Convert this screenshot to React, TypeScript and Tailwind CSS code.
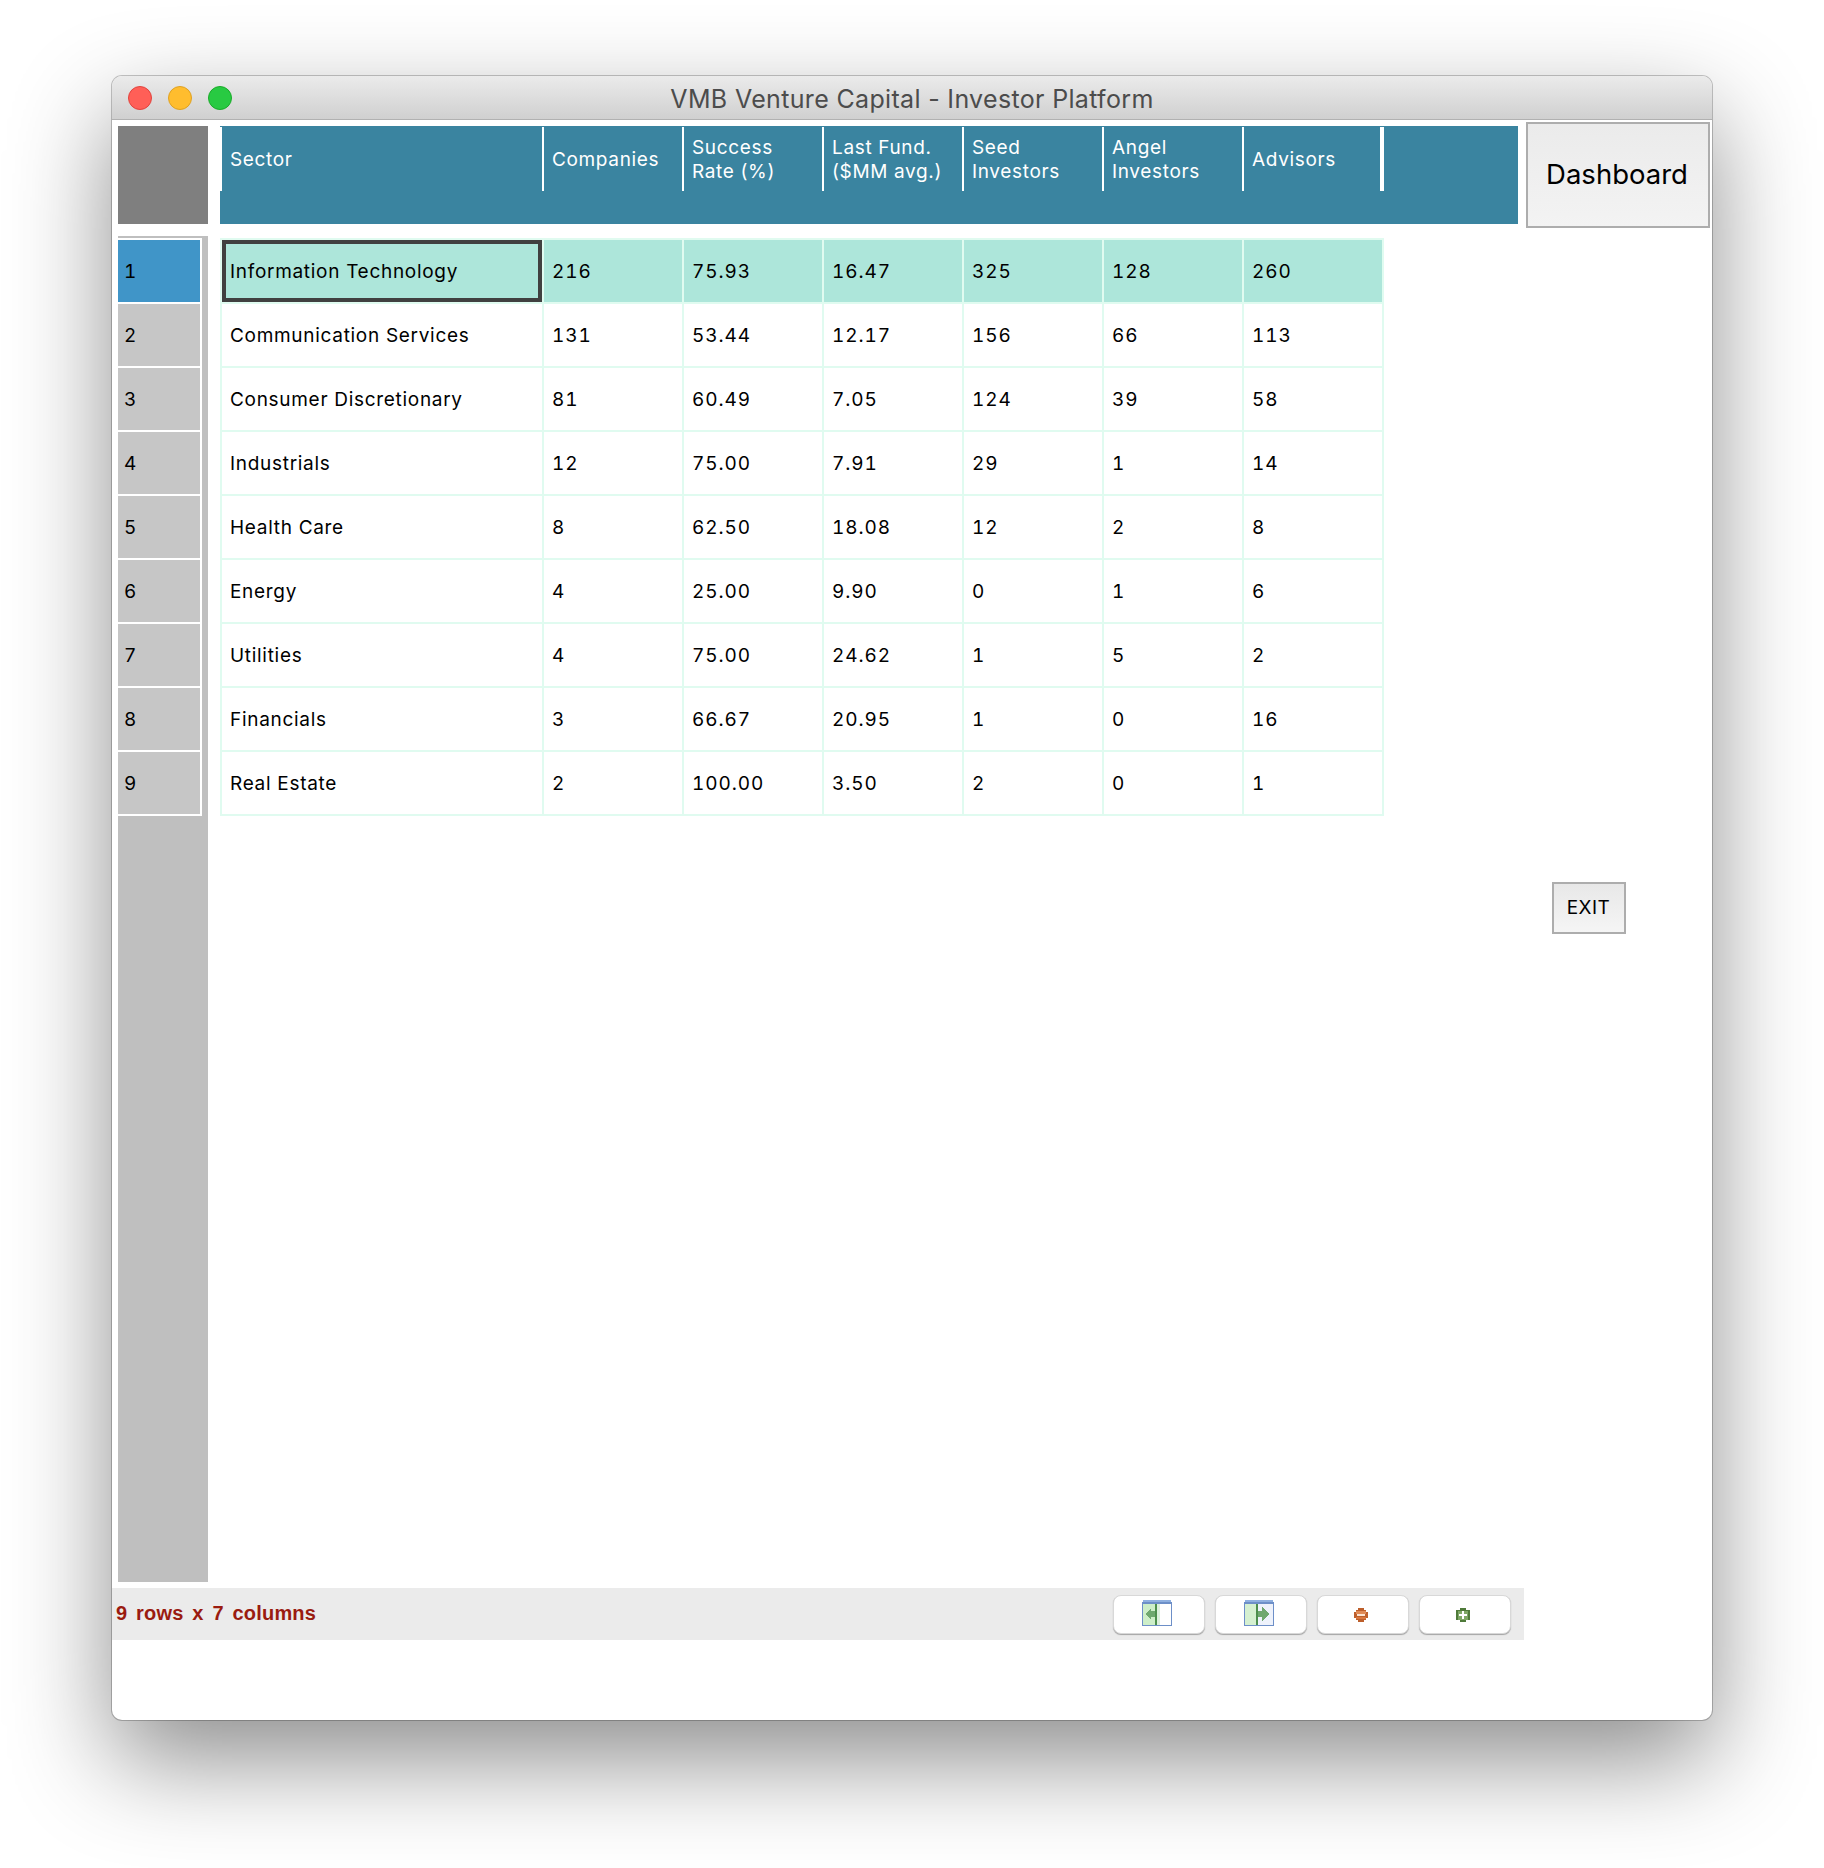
const rows = [
  ['Information Technology', '216', '75.93', '16.47', '325', '128', '260'],
  ['Communication Services', '131', '53.44', '12.17', '156', '66', '113'],
  ['Consumer Discretionary', '81', '60.49', '7.05', '124', '39', '58'],
  ['Industrials', '12', '75.00', '7.91', '29', '1', '14'],
  ['Health Care', '8', '62.50', '18.08', '12', '2', '8'],
  ['Energy', '4', '25.00', '9.90', '0', '1', '6'],
  ['Utilities', '4', '75.00', '24.62', '1', '5', '2'],
  ['Financials', '3', '66.67', '20.95', '1', '0', '16'],
  ['Real Estate', '2', '100.00', '3.50', '2', '0', '1'],
]

const headers = [
  ['Companies'],
  ['Success', 'Rate (%)'],
  ['Last Fund.', '($MM avg.)'],
  ['Seed', 'Investors'],
  ['Angel', 'Investors'],
  ['Advisors'],
]

function PaneLeftIcon() {
  return (
    <svg className="blur-[0.5px] mb-[2px]" width="30" height="26" viewBox="0 0 30 26" shapeRendering="crispEdges">
      <rect x="1" y="0" width="28" height="3" fill="#8fb0e0" />
      <rect x="0" y="2" width="30" height="24" fill="#6d8fc8" />
      <rect x="1" y="4" width="13" height="21" fill="#cdeec8" />
      <rect x="14" y="4" width="15" height="21" fill="#ffffff" />
      <rect x="13" y="4" width="2" height="21" fill="#4d8f4d" />
      <rect x="15" y="4" width="3" height="21" fill="#dcefdc" />
      <path d="M3 14 L9 8 V11 H13 V17 H9 V20 Z" fill="#6fa86f" />
    </svg>
  )
}

function PaneRightIcon() {
  return (
    <svg className="blur-[0.5px] mb-[2px]" width="30" height="26" viewBox="0 0 30 26" shapeRendering="crispEdges">
      <rect x="1" y="0" width="28" height="3" fill="#8fb0e0" />
      <rect x="0" y="2" width="30" height="24" fill="#6d8fc8" />
      <rect x="1" y="4" width="12" height="21" fill="#d5f0d0" />
      <rect x="13" y="4" width="16" height="21" fill="#eef2fb" />
      <rect x="12" y="4" width="2" height="21" fill="#4d8f4d" />
      <path d="M25 14 L18 7 V11 H14 V17 H18 V21 Z" fill="#6fa86f" />
    </svg>
  )
}

function MinusIcon() {
  return (
    <svg className="blur-[0.4px] mt-[2px]" width="14" height="14" viewBox="0 0 14 14" shapeRendering="crispEdges">
      <path d="M4 0H10V2H12V4H14V10H12V12H10V14H4V12H2V10H0V4H2V2H4Z" fill="#bd5f2b" />
      <rect x="2" y="3" width="10" height="3" fill="#e08a55" />
      <rect x="3" y="6" width="8" height="2" fill="#fbe3d0" />
      <rect x="2" y="9" width="10" height="2" fill="#d9763c" />
    </svg>
  )
}

function PlusIcon() {
  return (
    <svg className="blur-[0.4px] mt-[2px]" width="14" height="14" viewBox="0 0 14 14" shapeRendering="crispEdges">
      <path d="M4 0H10V2H14V12H10V14H4V12H0V2H4Z" fill="#4f7a3a" />
      <rect x="2" y="3" width="10" height="9" fill="#7fa866" />
      <rect x="3" y="6" width="8" height="2" fill="#ffffff" />
      <rect x="6" y="3" width="2" height="8" fill="#ffffff" />
    </svg>
  )
}

function ToolButton({ children }: { children: React.ReactNode }) {
  return (
    <button className="w-[92px] h-[39px] bg-white rounded-lg border border-[#d8d8d8] shadow-[0_1px_1px_rgba(0,0,0,0.3)] flex items-center justify-center pr-[4px]">
      {children}
    </button>
  )
}

export default function App() {
  return (
    <div className="w-[1824px] h-[1868px] bg-white pt-[76px] pl-[112px] font-['Inter',sans-serif] text-black overflow-hidden">
      <div className="w-[1600px] h-[1644px] bg-white rounded-[10px] shadow-[0_40px_100px_rgba(0,0,0,0.45),0_0_0_1px_rgba(0,0,0,0.22)] flex flex-col overflow-hidden">
        <div className="relative h-[44px] shrink-0 flex items-center justify-center pt-[4px] bg-gradient-to-b from-[#ebebeb] to-[#d0d0d0] border-b border-[#b1b1b1]">
          <div className="absolute left-[16px] top-[10px] flex gap-[16px]">
            <span className="w-[24px] h-[24px] rounded-full bg-[#ff5f57] border border-[#e0443e]" />
            <span className="w-[24px] h-[24px] rounded-full bg-[#ffbd2e] border border-[#dea123]" />
            <span className="w-[24px] h-[24px] rounded-full bg-[#28ca42] border border-[#1aab29]" />
          </div>
          <span className="text-[25px] tracking-[0.33px] text-[#4c4c4c]">VMB Venture Capital - Investor Platform</span>
        </div>

        <div className="flex flex-1 min-h-0">
          <div className="w-[1412px] shrink-0 flex flex-col">
            <div className="flex pl-[6px] pt-[6px]">
              <div className="w-[90px] h-[98px] bg-[#7f7f7f]" />
              <div className="ml-[12px] w-[1298px] h-[98px] bg-[#3a84a0] flex items-start pt-[1px] text-white text-[19px] leading-[24px] tracking-[0.65px]">
                <div className="w-[324px] h-[64px] border-x-2 border-white flex items-center px-[8px] pt-[1px]">Sector</div>
                {headers.map((h, i) => (
                  <div
                    key={i}
                    className={i === 5
                      ? 'w-[140px] h-[64px] border-r-4 border-white flex flex-col justify-center pl-[8px] pt-[1px]'
                      : 'w-[140px] h-[64px] border-r-2 border-white flex flex-col justify-center pl-[8px] pt-[1px]'}
                  >
                    {h.map((line) => (
                      <div key={line}>{line}</div>
                    ))}
                  </div>
                ))}
              </div>
            </div>

            <div className="flex pl-[6px] mt-[12px]">
              <div className="w-[90px] h-[1346px] bg-[#bfbfbf] pt-[2px]">
                <div className="w-[84px] border-t-2 border-white" />
                {rows.map((_, i) => (
                  <div
                    key={i}
                    className={i === 0
                      ? 'w-[84px] h-[64px] border-b-2 border-r-2 border-white flex items-center pl-[6px] pt-[2px] text-[19px] tabular-nums bg-[#4095c8]'
                      : 'w-[84px] h-[64px] border-b-2 border-r-2 border-white flex items-center pl-[6px] pt-[2px] text-[19px] tabular-nums bg-[#c6c6c6]'}
                  >
                    {i + 1}
                  </div>
                ))}
              </div>

              <div className="ml-[12px] mt-[2px]">
                <div className="border-t-2 border-l-2 border-[#e0fbf0] w-[1164px] text-[19px] tracking-[0.7px]">
                  {rows.map((row, r) => (
                    <div key={r} className={r === 0 ? 'flex h-[64px] bg-[#ade6da]' : 'flex h-[64px]'}>
                      {row.map((cell, c) => (
                        <div
                          key={c}
                          className={c === 0
                            ? 'w-[322px] border-r-2 border-b-2 border-[#e0fbf0] flex items-center'
                            : 'w-[140px] border-r-2 border-b-2 border-[#e0fbf0] flex items-center pl-[8px] pt-[2px] tabular-nums tracking-[0.9px]'}
                        >
                          {c === 0 ? (
                            <div className={r === 0
                              ? 'w-full h-full flex items-center pl-[4px] pt-[2px] border-[4px] border-[#404040]'
                              : 'w-full h-full flex items-center pl-[8px] pt-[2px]'}
                            >
                              {cell}
                            </div>
                          ) : cell}
                        </div>
                      ))}
                    </div>
                  ))}
                </div>
              </div>
            </div>

            <div className="mt-[6px] h-[52px] bg-[#ebebeb] flex items-center justify-between pl-[4px] pr-[13px]">
              <span className="font-['Liberation_Sans',sans-serif] font-bold text-[20px] tracking-[0.2px] text-[#9a1b10] [word-spacing:3px] pb-[2px]">9 rows x 7 columns</span>
              <div className="flex gap-[10px]">
                <ToolButton><PaneLeftIcon /></ToolButton>
                <ToolButton><PaneRightIcon /></ToolButton>
                <ToolButton><MinusIcon /></ToolButton>
                <ToolButton><PlusIcon /></ToolButton>
              </div>
            </div>
          </div>

          <div className="flex-1 flex flex-col">
            <button className="ml-[2px] mt-[2px] w-[184px] h-[106px] border-2 border-[#adadad] bg-gradient-to-b from-[#ebebeb] to-[#f3f3f3] text-[27.5px] pr-[2px]">
              Dashboard
            </button>
            <button className="ml-[28px] mt-[654px] w-[74px] h-[52px] border-2 border-[#adadad] bg-gradient-to-b from-[#e8e8e8] to-[#f5f5f5] text-[19px] tracking-[0.5px] pr-[1px]">
              EXIT
            </button>
          </div>
        </div>
      </div>
    </div>
  )
}
